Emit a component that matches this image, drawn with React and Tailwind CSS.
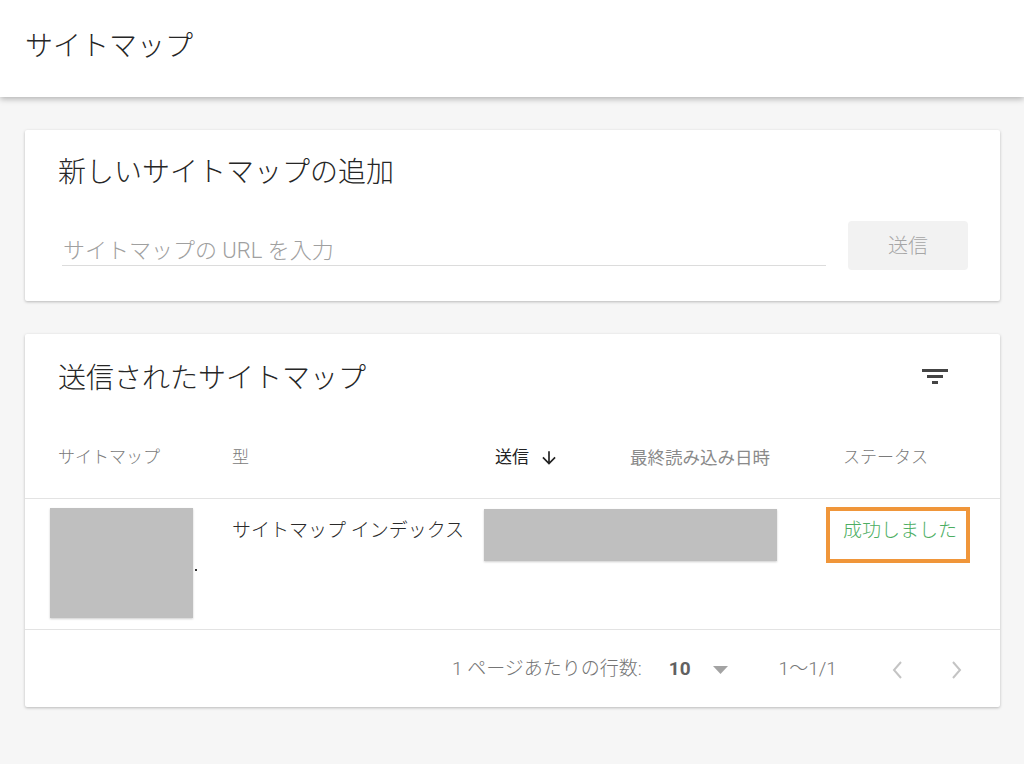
import { useState } from "react";

// Search Console style sitemap page: add form + submitted sitemaps table.
const FONT = { fontFamily: "Roboto, 'Noto Sans CJK JP', 'Noto Sans', sans-serif" };

export default function App() {
  const [url, setUrl] = useState("");

  return (
    <div className="min-h-[764px] bg-[#f6f6f6] text-[#262626] font-light" style={FONT}>
      <header className="relative z-10 h-[97px] bg-white flex items-center pl-[25px] shadow-[0_2px_6px_rgba(0,0,0,0.28)]">
        <h1 className="text-[28px] leading-[36px] mt-[-4px]">サイトマップ</h1>
      </header>

      <main className="pl-[25px] pr-[24px] pt-[33px] flex flex-col gap-[33px]">
        <section className="bg-white rounded-[2px] shadow-[0_1px_3px_rgba(0,0,0,0.25)] pl-[33px] pr-[32px] pt-[27px] pb-[31px]">
          <h2 className="text-[28px] leading-[32px]">新しいサイトマップの追加</h2>
          <div className="mt-[32px] flex items-start gap-[22px]">
            <div className="ml-[4px] mt-[15px] w-[764px] h-[30px] border-b border-[#dcdcdc]">
              <input
                value={url}
                onChange={(e) => setUrl(e.target.value)}
                placeholder="サイトマップの URL を入力"
                className="w-full h-[29px] text-[22px] leading-[29px] outline-none placeholder:text-[#a0a0a0] pl-[1px]"
              />
            </div>
            <button
              disabled={!url}
              className="w-[120px] h-[49px] rounded-[4px] bg-[#f2f2f2] text-[20px] text-[#a6a6a6]"
            >
              送信
            </button>
          </div>
        </section>

        <section className="bg-white rounded-[2px] shadow-[0_1px_3px_rgba(0,0,0,0.25)]">
          <div className="flex items-center justify-between pl-[33px] pr-[52px] pt-[29px] pb-[23px]">
            <h2 className="text-[28px] leading-[32px]">送信されたサイトマップ</h2>
            <svg width="26" height="16" viewBox="0 0 26 16" className="mt-[-4px]">
              <rect x="0" y="0" width="26" height="3" fill="#444" />
              <rect x="5" y="6" width="16" height="3" fill="#444" />
              <rect x="10" y="12" width="6" height="3" fill="#444" />
            </svg>
          </div>

          <div className="grid grid-cols-[174px_263px_135px_213px_1fr] pl-[33px] h-[81px] items-center border-b border-[#e3e3e3] text-[17px] text-[#7a7a7a]">
            <span>サイトマップ</span>
            <span>型</span>
            <span className="flex items-center gap-[10px] text-[#222] font-normal">
              送信
              <svg width="20" height="20" viewBox="0 0 24 24" fill="#222">
                <path d="M20 12l-1.41-1.41L13 16.17V4h-2v12.17l-5.58-5.59L4 12l8 8 8-8z" />
              </svg>
            </span>
            <span className="text-[17.5px] font-normal text-[#8a8a8a]">最終読み込み日時</span>
            <span>ステータス</span>
          </div>

          <div className="grid grid-cols-[174px_263px_135px_213px_1fr] pl-[33px] h-[131px] items-start pt-[8px] border-b border-[#e3e3e3] text-[19px]">
            <div className="flex items-start">
              <div className="ml-[-8px] mt-[1px] w-[143px] h-[110px] bg-[#bfbfbf] shadow-[0_1px_2px_rgba(0,0,0,0.2)]" />
              <span className="ml-[2px] mt-[62px] w-[2px] h-[2px] bg-[#333]" />
            </div>
            <span className="mt-[10px] leading-[28px] text-[#2a2a2a] whitespace-nowrap">サイトマップ インデックス</span>
            <div className="col-span-2 ml-[-11px] mt-[2px] w-[293px] h-[52px] bg-[#bfbfbf] shadow-[0_1px_2px_rgba(0,0,0,0.2)]" />
            <div className="ml-[-17px] w-[144px] h-[56px] border-4 border-[#f0963a] pl-[13px] pt-[4px] leading-[32px] text-[#4cae62] whitespace-nowrap">
              成功しました
            </div>
          </div>

          <div className="h-[77px] flex items-center text-[19px] text-[#757575] pl-[427px] pt-[2px]">
            <span className="whitespace-nowrap">1 ページあたりの行数:</span>
            <span className="ml-[27px] font-bold text-[#616161]">10</span>
            <svg width="15" height="8" viewBox="0 0 15 8" className="ml-[22px] mt-[1px]">
              <path d="M0 0h15L7.5 8z" fill="#a3a3a3" />
            </svg>
            <span className="ml-[51px] whitespace-nowrap">1〜1/1</span>
            <svg width="12" height="20" viewBox="0 0 12 20" className="ml-[54px]" fill="none" stroke="#c4c4c4" strokeWidth="2">
              <path d="M10 2L3 10l7 8" />
            </svg>
            <svg width="12" height="20" viewBox="0 0 12 20" className="ml-[48px]" fill="none" stroke="#c4c4c4" strokeWidth="2">
              <path d="M2 2l7 8-7 8" />
            </svg>
          </div>
        </section>
      </main>
    </div>
  );
}
